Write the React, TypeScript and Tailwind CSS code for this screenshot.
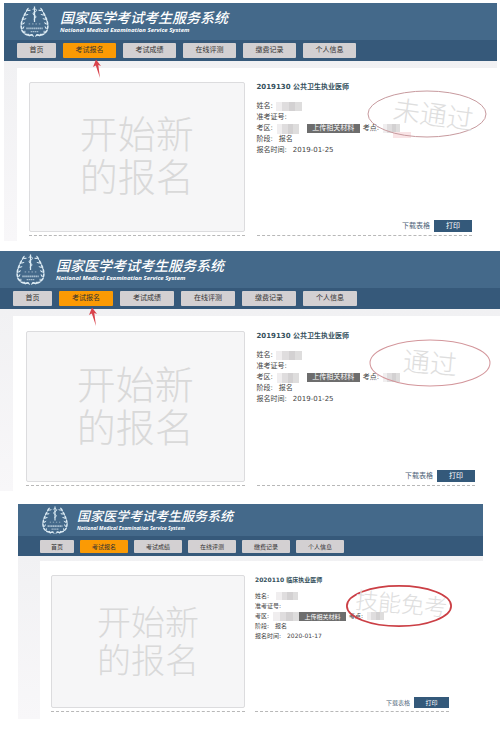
import { Fragment } from "react"
import clsx from "clsx"

type Size = "md" | "sm"

type HeaderProps = {
    size: Size,
    gutter: string,
    tab: string,
    arrow?: boolean,
}

type ExamPanelProps = HeaderProps & {
    frame: string,
    columns: string,
    bigText: string,
    exam: string,
    date: string,
    stamp: StampProps,
}

type StampProps = {
    text: string,
    place: string,
    textStyle: string,
    stroke: string,
    strokeWidth: number,
    smudge?: string,
}

const navItems = ["首页", "考试报名", "考试成绩", "在线评测", "缴费记录", "个人信息"]

// leaves of the left half of the wreath, mirrored for the right half
const leaves = [
    [8.5, 4, -58],
    [6, 8.5, -62],
    [4, 13, -68],
    [2.6, 17.5, -80],
    [2.4, 22, -100],
    [4, 26.5, -130],
    [8, 29.5, -165],
    [12, 30, 170],
]

const Wreath = () => (
    <g fill="#dcebf4" stroke="none">
        {leaves.map(([x, y, angle]) => (
            <Fragment key={y}>
                <ellipse cx={x} cy={y} rx="2.5" ry="0.9" transform={`rotate(${angle} ${x} ${y})`} />
                <ellipse cx={x + 2} cy={y + 0.5} rx="1.8" ry="0.6" transform={`rotate(${angle + 45} ${x + 2} ${y + 0.5})`} />
            </Fragment>
        ))}
    </g>
)

const Logo = ({ className }: { className: string }) => (
    <svg viewBox="0 0 32 32" className={className} aria-hidden="true">
        <Wreath />
        <g transform="translate(32 0) scale(-1 1)">
            <Wreath />
        </g>
        <g fill="none" stroke="#dcebf4" strokeWidth="1">
            <path d="M16 0.500v16" strokeWidth="1.300" />
            <path d="M14 4c1-2 4.500-1 4 0.800s-4 1.500-3.500 3.400 3.500 1.500 3 3.200-2 1-2 2.400" />
            <path d="M10 18.500h12" strokeWidth="1" strokeDasharray="1.500 2" opacity="0.600" />
            <path d="M7.500 23h17" strokeWidth="1.800" strokeDasharray="1.600 0.400" opacity="0.650" />
            <path d="M12 26.500h8" strokeWidth="1.400" strokeDasharray="1.600 0.500" opacity="0.650" />
        </g>
    </svg>
)

const Arrow = () => (
    <svg viewBox="0 0 8 20" className="absolute left-1/2 top-4 z-10 ml-[3px] h-5 w-2" aria-hidden="true">
        <path d="M3 0.500L0 8l2.800-1.500L7 19 5.300 6 8 7z" fill="#d9434c" />
    </svg>
)

const Stamp = ({ text, place, textStyle, stroke, strokeWidth, smudge }: StampProps) => (
    <div className={clsx("absolute flex items-center justify-center", place)}>
        {smudge && <span className={clsx("absolute bg-[#f9e4e6]", smudge)} />}
        <svg viewBox="0 0 120 48" preserveAspectRatio="none" className="absolute inset-0 size-full" aria-hidden="true">
            <ellipse cx="60" cy="24" rx="59" ry="23" fill="none" stroke={stroke} strokeWidth={strokeWidth} />
        </svg>
        <span className={clsx("whitespace-nowrap font-light leading-none text-[#dedede]", textStyle)}>{text}</span>
    </div>
)

// blurred-out personal data
const Mosaic = ({ className }: { className: string }) => (
    <span className={clsx("flex shrink-0", className)}>
        <span className="flex-1 bg-[#f0eeef]" />
        <span className="flex-1 bg-[#dfddde]" />
        <span className="flex-1 bg-[#d3d1d2]" />
        <span className="flex-1 bg-[#dedddd]" />
    </span>
)

const Header = ({ size, gutter, tab, arrow }: HeaderProps) => {
    const md = size === "md"

    return (
        <header className="text-white">
            <div className={clsx("flex items-center bg-[#44698a]", gutter, md ? "h-[37px] gap-[10px]" : "h-8 gap-2")}>
                <Logo className={md ? "ml-[2px] size-[31px]" : "ml-[1px] size-7"} />
                <div className="flex flex-col">
                    <h1 className={clsx("font-medium italic", md ? "text-[14px] leading-[18px]" : "text-[13px] leading-[16px]")}>国家医学考试考生服务系统</h1>
                    <p className={clsx("font-bold italic font-['Open_Sans']", md ? "text-[6px] leading-[7px]" : "text-[5px] leading-[6px]")}>National Medical Examination Service System</p>
                </div>
            </div>
            <nav className={clsx("flex items-center bg-[#36597a]", gutter, md ? "h-[21px] gap-[7px]" : "h-5 gap-[6px]")}>
                {navItems.map((item, idx) => (
                    <div key={item} className="relative flex">
                        <button
                            className={clsx(
                                "rounded-[1px] text-center text-[#333]",
                                md ? "h-[15px] text-[7px] leading-[15px]" : "h-[13px] text-[6px] leading-[13px]",
                                idx === 0 ? (md ? "w-[39px]" : "w-[34px]") : tab,
                                idx === 1 ? "bg-[#fb9a04]" : "bg-[#d3d0d2]",
                            )}
                        >
                            {item}
                        </button>
                        {idx === 1 && arrow && <Arrow />}
                    </div>
                ))}
            </nav>
        </header>
    )
}

const ExamPanel = ({ size, frame, gutter, tab, columns, bigText, exam, date, arrow, stamp }: ExamPanelProps) => {
    const md = size === "md"

    return (
        <section className={frame}>
            <Header size={size} gutter={gutter} tab={tab} arrow={arrow} />
            <div className={clsx("bg-linear-to-b from-[#f1f1f3] to-[#f8f7f9]", gutter, md ? "pt-[7px]" : "pt-[5px]")}>
                <div className={clsx("relative grid grid-cols-2 bg-white", columns)}>
                    <div className="border-b border-dashed border-[#b8b8b8] pb-[3px]">
                        <button className={clsx("block w-full rounded-[2px] border border-[#dcdcde] bg-[#f6f6f7] font-light text-[#d9d9d9]", bigText)}>
                            开始新<br />的报名
                        </button>
                    </div>
                    <div className={clsx("flex flex-col border-b border-dashed border-[#b8b8b8] text-[#444]", md ? "text-[7px] leading-[11px]" : "text-[6px] leading-[10px]")}>
                        <h2 className={clsx("font-bold text-[#34505c]", md ? "mb-[8px]" : "mb-[6px]")}>{exam}</h2>
                        <div className="flex items-center gap-[3px]">姓名:<Mosaic className={md ? "h-[9px] w-[26px]" : "ml-1 h-[8px] w-[22px]"} /></div>
                        <div>准考证号:</div>
                        <div className="flex items-center whitespace-nowrap">
                            考区:
                            <Mosaic className={md ? "ml-1 mr-2 h-[10px] w-[22px]" : "ml-1 h-[9px] w-[26px]"} />
                            <button className={clsx("h-[9px] bg-[#6d6d6d] text-center leading-[9px] text-white", md ? "w-[53px]" : "w-[47px]")}>上传相关材料</button>
                            <span className="ml-[3px]">考点:</span>
                            <Mosaic className={md ? "ml-1 h-[9px] w-[17px]" : "ml-1 h-[8px] w-[17px]"} />
                        </div>
                        <div>阶段:<span className="ml-[6px]">报名</span></div>
                        <div>报名时间:<span className="ml-[6px]">{date}</span></div>
                        <div className="mb-[3px] mt-auto flex items-center justify-end gap-[4px]">
                            <a href="#download" className="text-[#4d6478]">下载表格</a>
                            <button className={clsx("bg-[#34597a] text-center text-white", md ? "h-[12px] w-[38px] leading-[12px]" : "h-[11px] w-[35px] leading-[11px]")}>打印</button>
                        </div>
                    </div>
                    <Stamp {...stamp} />
                </div>
            </div>
        </section>
    )
}

export default function App() {
    return (
        <main className="flex flex-col bg-white pt-[3px] font-['DejaVu_Sans','Noto_Sans_CJK_SC',sans-serif]">
            <ExamPanel
                size="md"
                frame="ml-[4px] mr-[3px]"
                gutter="pl-[13px]"
                tab="w-[53px]"
                columns="gap-3 pt-[14px] pb-[5px] pl-[12px] pr-[25px]"
                bigText="h-[150px] text-[38px] leading-[43px]"
                exam="2019130 公共卫生执业医师"
                date="2019-01-25"
                arrow
                stamp={{ text: "未通过", place: "right-[10px] top-[22px] h-[48px] w-[120px]", textStyle: "rotate-8 text-[27px] pl-3", stroke: "#c79a9e", strokeWidth: 1, smudge: "left-[26px] bottom-0 h-[6px] w-[18px]" }}
            />
            <ExamPanel
                size="md"
                frame="mt-[10px]"
                gutter="pl-[13px]"
                tab="w-[54px]"
                columns="gap-3 pt-[15px] pb-[5px] pl-[13px] pr-[25px]"
                bigText="h-[151px] text-[39px] leading-[43px]"
                exam="2019130 公共卫生执业医师"
                date="2019-01-25"
                arrow
                stamp={{ text: "通过", place: "right-[9px] top-[23px] h-[48px] w-[122px]", textStyle: "rotate-5 text-[27px]", stroke: "#d3969b", strokeWidth: 1 }}
            />
            <ExamPanel
                size="sm"
                frame="mt-[13px] ml-[18px] mr-[17px]"
                gutter="pl-[22px]"
                tab="w-[48px]"
                columns="gap-[10px] pt-[14px] pb-[7px] pl-[11px] pr-[34px]"
                bigText="h-[133px] text-[34px] leading-[38px]"
                exam="2020110 临床执业医师"
                date="2020-01-17"
                stamp={{ text: "技能免考", place: "right-[31px] top-[24px] h-[42px] w-[106px]", textStyle: "rotate-5 text-[23px] pb-1 pl-1", stroke: "#cb3f45", strokeWidth: 2 }}
            />
        </main>
    )
}
